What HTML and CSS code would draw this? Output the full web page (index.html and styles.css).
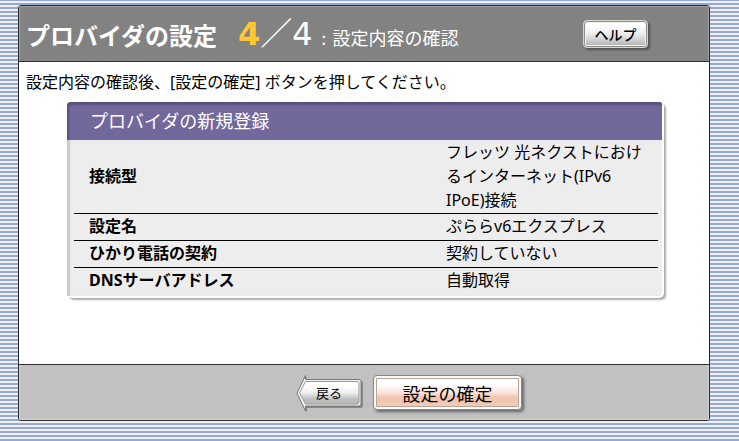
FILE: index.html
```html
<!DOCTYPE html>
<html lang="ja">
<head>
    <meta charset="UTF-8">
    <meta name="viewport" content="width=device-width, initial-scale=1.0">
    <title>プロバイダの設定</title>
    <link rel="stylesheet" href="styles.css">
</head>
<body>
    <form class="container">
        <header class="header">
            <h1>プロバイダの設定</h1>
            <p class="step"><strong>4</strong>／4</p>
            <p class="step-name">: 設定内容の確認</p>
            <button type="button" class="btn btn-help">ヘルプ</button>
        </header>

        <main class="content">
            <p class="message">設定内容の確認後、[設定の確定] ボタンを押してください。</p>

            <section class="panel">
                <h2>プロバイダの新規登録</h2>
                <div class="panel-body">
                    <table>
                        <tr>
                            <th scope="row">接続型</th>
                            <td>フレッツ 光ネクストにおけるインターネット(IPv6 IPoE)接続</td>
                        </tr>
                        <tr>
                            <th scope="row">設定名</th>
                            <td>ぷららv6エクスプレス</td>
                        </tr>
                        <tr>
                            <th scope="row">ひかり電話の契約</th>
                            <td>契約していない</td>
                        </tr>
                        <tr>
                            <th scope="row">DNSサーバアドレス</th>
                            <td>自動取得</td>
                        </tr>
                    </table>
                </div>
            </section>
        </main>

        <footer class="footer">
            <button type="button" class="btn-back">
                <svg class="arrow" width="68" height="40" viewBox="0 0 68 40" aria-hidden="true">
                    <defs>
                        <linearGradient id="silver" x1="0" y1="0" x2="0" y2="1">
                            <stop offset="0.2" stop-color="#fff"/>
                            <stop offset="0.5" stop-color="#ededed"/>
                            <stop offset="0.8" stop-color="#bcbcbc"/>
                        </linearGradient>
                    </defs>
                    <path d="M3 21 L11 3 V7 H65 Q67 7 67 9 V32 Q67 34 65 34 H11 V39 Z" fill="#888"/>
                    <path d="M1 19 L9.500 1.500 V5.500 H63 Q65 5.500 65 7.500 V30 Q65 32 63 32 H9.500 V37 Z" fill="#f5f5f2" stroke="#77776f"/>
                    <path d="M3.500 19 L9.500 7.500 H61 Q63 7.500 63 9.500 V28 Q63 30 61 30 H9.500 Z" fill="url(#silver)" stroke="#999" stroke-width="1"/>
                </svg>
                <span>戻る</span>
            </button>
            <button type="submit" class="btn btn-submit">設定の確定</button>
        </footer>
    </form>
</body>
</html>
```
FILE: styles.css
```css
* {
    margin: 0;
    padding: 0;
    box-sizing: border-box;
}
body {
    padding: 5px 29px 20px 18px;
    font-family: "Noto Sans", "Noto Sans CJK JP", sans-serif;
    font-size: 16px;
    line-height: 24px;
    color: #000;
    background: repeating-linear-gradient(#94a9d9 0 1px, #f0f0f0 1px 3px, #94a9d9 3px 4px);
}
.container {
    display: flex;
    flex-direction: column;
    border: 1px solid #2b2b2b;
    border-radius: 3px;
    background: #fff;
    overflow: hidden;
}

/* header */
.header {
    display: flex;
    align-items: baseline;
    height: 56px;
    padding: 0 61px 0 7px;
    color: #fff;
    background: #828282;
    border-bottom: 1px solid #2f2a2d;
    box-shadow: inset 1px 1px 1px #a3a39b, inset -1px 0 1px #a3a39b;
}
.header h1 {
    font-size: 24px;
    line-height: 60px;
}
.step {
    margin-left: 21px;
    font-family: "DejaVu Sans", "Noto Sans CJK JP", sans-serif;
    font-size: 32px;
    white-space: nowrap;
}
.step strong {
    color: #ffc736;
}
.step-name {
    margin-left: 8px;
    font-family: "DejaVu Sans", "Noto Sans CJK JP", sans-serif;
    font-size: 18px;
    white-space: nowrap;
}

/* buttons */
.btn {
    font-family: "Noto Sans CJK JP", sans-serif;
    color: #000;
    border: 1px solid #8a8a82;
    border-radius: 4px;
    cursor: pointer;
}
.btn-help {
    align-self: center;
    width: 65px;
    height: 28px;
    margin-left: auto;
    font-size: 14px;
    font-weight: 500;
    line-height: 20px;
    background: linear-gradient(#fff 20%, #ececec 50%, #adadad);
    border-color: #d6d6cf;
    box-shadow: inset 0 0 0 1px #8f8f88, inset 0 0 0 2px #f3f3ef, 2px 2px 2px #555;
}
.btn-submit {
    width: 149px;
    height: 35px;
    font-size: 18px;
    line-height: 24px;
    background: linear-gradient(#fff 25%, #fae6dd 50%, #f1c4ae 65%, #f5cdb9);
    box-shadow: inset 0 0 0 2px #fff8f3, inset 0 0 0 3px #b3a69e, 2px 2px 3px #666;
}
.btn-back {
    position: relative;
    width: 66px;
    height: 38px;
    font-family: "Noto Sans CJK JP", sans-serif;
    font-size: 13px;
    line-height: 20px;
    color: #000;
    background: none;
    border: none;
    cursor: pointer;
}
.arrow {
    position: absolute;
    left: 0;
    top: 0;
}
.btn-back span {
    position: relative;
}

/* content */
.content {
    padding: 8px 45px 66px 7px;
}
.panel {
    margin: 8px 0 0 41px;
    border-radius: 5px;
    background: #ededed;
    border-right: 2px solid #fff;
    border-bottom: 2px solid #fff;
    box-shadow: 2px 2px 2px #aaa;
}
.panel h2 {
    padding: 7px 23px;
    font-size: 18px;
    font-weight: normal;
    color: #fff;
    background: #73689b;
    border-radius: 4px 3px 0 0;
    box-shadow: inset 2px 3px 2px #5c507e;
}
.panel-body {
    padding: 0 4px 2px 7px;
    box-shadow: inset 3px 0 1px #c9c9c9;
}
.panel table {
    width: 100%;
    table-layout: fixed;
    border-collapse: separate;
    border-spacing: 0;
}
.panel th {
    padding: 0 15px 2px;
    text-align: left;
}
.panel td {
    width: 213px;
    padding: 0 5px 2px 1px;
}
.panel tr:first-child > * {
    padding-bottom: 1px;
}
.panel tr:not(:last-child) > * {
    border-bottom: 1px solid #000;
}

/* footer */
.footer {
    display: flex;
    align-items: center;
    justify-content: center;
    gap: 11px;
    height: 56px;
    padding-left: 90px;
    background: #c1c1c1;
    border-top: 1px solid #2f2a2d;
    box-shadow: inset 1px -1px 1px #d5d5cf, inset -1px 0 1px #d5d5cf;
}
```
